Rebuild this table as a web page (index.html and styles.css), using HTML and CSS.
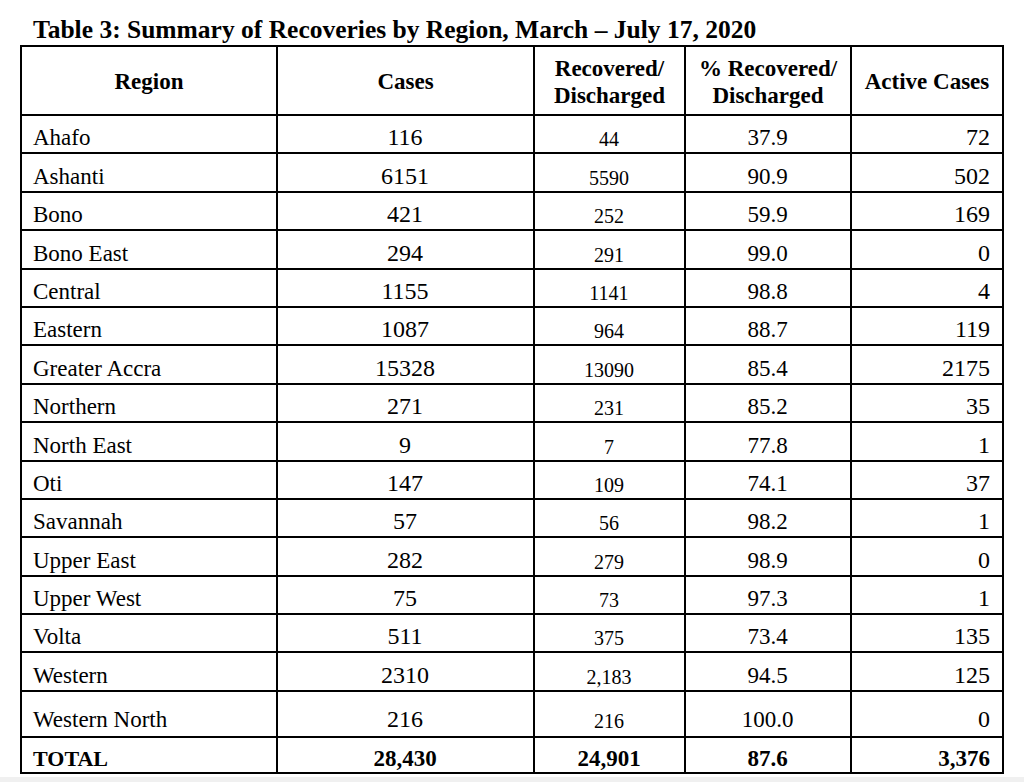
FILE: index.html
```html
<!DOCTYPE html>
<html lang="en">
<head>
<meta charset="utf-8">
<title>Table 3: Summary of Recoveries by Region</title>
<link rel="stylesheet" href="styles.css">
</head>
<body>
<main class="sheet">
  <h1 class="caption">Table 3: Summary of Recoveries by Region, March – July 17, 2020</h1>
  <table class="recoveries">
    <colgroup>
      <col class="c-region">
      <col class="c-cases">
      <col class="c-rec">
      <col class="c-pct">
      <col class="c-active">
    </colgroup>
    <thead>
      <tr class="head">
        <th>Region</th>
        <th>Cases</th>
        <th>Recovered/<br>Discharged</th>
        <th>% Recovered/<br>Discharged</th>
        <th>Active Cases</th>
      </tr>
    </thead>
    <tbody>
      <tr class="row"><td class="region">Ahafo</td><td class="cases">116</td><td class="rec">44</td><td class="pct">37.9</td><td class="active">72</td></tr>
      <tr class="row"><td class="region">Ashanti</td><td class="cases">6151</td><td class="rec">5590</td><td class="pct">90.9</td><td class="active">502</td></tr>
      <tr class="row"><td class="region">Bono</td><td class="cases">421</td><td class="rec">252</td><td class="pct">59.9</td><td class="active">169</td></tr>
      <tr class="row"><td class="region">Bono East</td><td class="cases">294</td><td class="rec">291</td><td class="pct">99.0</td><td class="active">0</td></tr>
      <tr class="row"><td class="region">Central</td><td class="cases">1155</td><td class="rec">1141</td><td class="pct">98.8</td><td class="active">4</td></tr>
      <tr class="row"><td class="region">Eastern</td><td class="cases">1087</td><td class="rec">964</td><td class="pct">88.7</td><td class="active">119</td></tr>
      <tr class="row"><td class="region">Greater Accra</td><td class="cases">15328</td><td class="rec">13090</td><td class="pct">85.4</td><td class="active">2175</td></tr>
      <tr class="row"><td class="region">Northern</td><td class="cases">271</td><td class="rec">231</td><td class="pct">85.2</td><td class="active">35</td></tr>
      <tr class="row"><td class="region">North East</td><td class="cases">9</td><td class="rec">7</td><td class="pct">77.8</td><td class="active">1</td></tr>
      <tr class="row"><td class="region">Oti</td><td class="cases">147</td><td class="rec">109</td><td class="pct">74.1</td><td class="active">37</td></tr>
      <tr class="row"><td class="region">Savannah</td><td class="cases">57</td><td class="rec">56</td><td class="pct">98.2</td><td class="active">1</td></tr>
      <tr class="row"><td class="region">Upper East</td><td class="cases">282</td><td class="rec">279</td><td class="pct">98.9</td><td class="active">0</td></tr>
      <tr class="row"><td class="region">Upper West</td><td class="cases">75</td><td class="rec">73</td><td class="pct">97.3</td><td class="active">1</td></tr>
      <tr class="row"><td class="region">Volta</td><td class="cases">511</td><td class="rec">375</td><td class="pct">73.4</td><td class="active">135</td></tr>
      <tr class="row"><td class="region">Western</td><td class="cases">2310</td><td class="rec">2,183</td><td class="pct">94.5</td><td class="active">125</td></tr>
      <tr class="row tall"><td class="region">Western North</td><td class="cases">216</td><td class="rec">216</td><td class="pct">100.0</td><td class="active">0</td></tr>
    </tbody>
    <tfoot>
      <tr class="total"><td class="region">TOTAL</td><td class="cases">28,430</td><td class="rec">24,901</td><td class="pct">87.6</td><td class="active">3,376</td></tr>
    </tfoot>
  </table>
</main>
<div class="strip"></div>
</body>
</html>
```

FILE: styles.css
```css
html, body {
  margin: 0;
  padding: 0;
}
body {
  background: #f0f0f0;
  font-family: "Liberation Serif", "Times New Roman", serif;
  color: #000;
}
.sheet {
  background: #fff;
  height: 777px;
  padding: 17px 0 0 20px;
  box-sizing: border-box;
}
.caption {
  margin: 0 0 0 13px;
  font-size: 25.5px;
  font-weight: bold;
  line-height: 25px;
  height: 28px;
  white-space: nowrap;
}
.recoveries {
  border-collapse: collapse;
  table-layout: fixed;
  width: 982px;
  border: 2px solid #000;
}
.c-region { width: 256px; }
.c-cases { width: 257px; }
.c-rec { width: 151px; }
.c-pct { width: 166px; }
.c-active { width: 152px; }

.recoveries th,
.recoveries td {
  border: 2px solid #000;
  padding: 0 12px 1px 11px;
  vertical-align: bottom;
  white-space: nowrap;
}
.recoveries th {
  font-size: 23px;
  font-weight: bold;
  line-height: 27px;
  text-align: center;
  vertical-align: middle;
  padding: 2px 4px 0;
}
.head { height: 69px; }
.row { height: 38.4px; }
.row.tall { height: 46px; }
.row.tall td { padding-bottom: 3px; }
.total { height: 36px; }

.region { text-align: left; font-size: 23px; }
.cases { text-align: center; font-size: 24px; }
.rec { text-align: center; font-size: 20px; }
.pct { text-align: center; font-size: 23px; }
.active { text-align: right; font-size: 24px; }

.total td {
  font-weight: bold;
  font-size: 23px;
  padding-bottom: 0;
}
.total .region { font-size: 22px; }

.strip {
  height: 5px;
  background: #f0f0f0;
}
```
